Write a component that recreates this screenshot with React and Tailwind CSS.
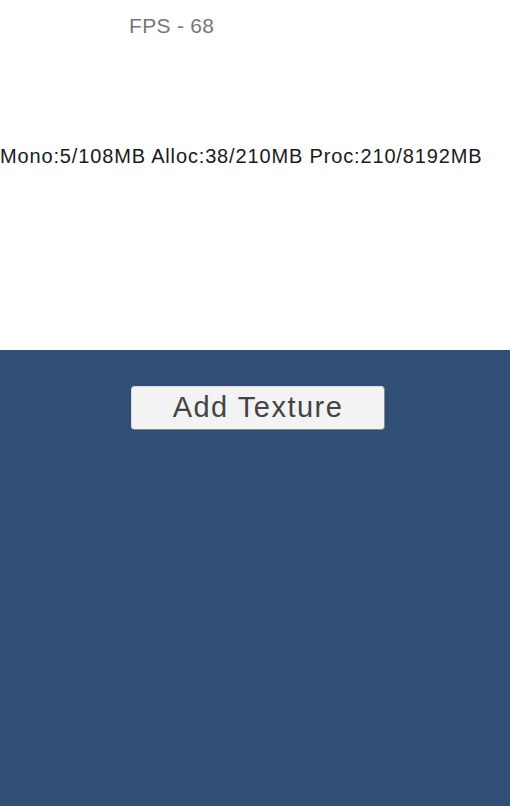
export default function App() {
  return (
    <div className="w-[510px] h-[806px] flex flex-col" style={{ fontFamily: '"Liberation Sans", Arial, sans-serif' }}>
      <div className="h-[350px] bg-white relative">
        <div className="absolute left-[129px] top-[12px] text-[21px] leading-[28px] text-[#777777] tracking-[0.3px]">FPS - 68</div>
        <div className="absolute left-0 top-[142px] text-[20px] leading-[28px] text-[#1a1a1a] tracking-[0.85px] whitespace-nowrap">Mono:5/108MB Alloc:38/210MB Proc:210/8192MB</div>
      </div>
      <div className="flex-1 bg-[#314e76] pt-[36px] pl-[131px]">
        <div className="w-[254px] h-[44px] rounded-[4px] bg-[#f3f3f3] border border-t-[#d8d8d8] border-l-[#d8d8d8] border-r-[#8a8a8a] border-b-[#8a8a8a] flex items-center justify-center text-[29px] text-[#444444] tracking-[1.5px]">Add Texture</div>
      </div>
    </div>
  );
}
